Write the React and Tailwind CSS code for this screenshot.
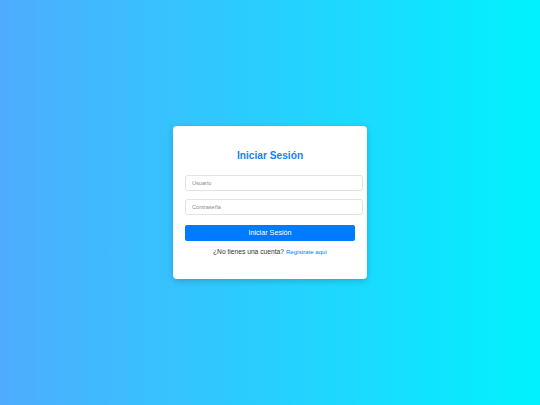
export default function App() {
  return (
    <div
      className="w-full h-[405px] flex items-center justify-center bg-[linear-gradient(to_right,#4facfe,#00f2fe)]"
      style={{ fontFamily: '"Liberation Sans", Arial, sans-serif' }}
    >
      <div className="w-[194px] h-[153px] bg-white rounded-[4px] shadow-[0_2px_6px_rgba(0,0,0,0.18)] pt-[12px] px-[12px] flex flex-col">
        <h2 className="mt-[8px] h-[20px] flex items-center justify-center text-[10.2px] font-bold text-[#1583f0] leading-none">
          Iniciar Sesión
        </h2>
        <input
          type="text"
          placeholder="Usuario"
          className="mt-[9px] w-[178px] h-[16px] shrink-0 border border-[#e2e2e2] rounded-[3px] px-[6px] text-[5.6px] outline-none placeholder:text-[#8a8a8a]"
        />
        <input
          type="password"
          placeholder="Contraseña"
          className="mt-[8px] w-[178px] h-[16px] shrink-0 border border-[#e2e2e2] rounded-[3px] px-[6px] text-[5.6px] outline-none placeholder:text-[#8a8a8a]"
        />
        <button className="mt-[10px] w-[170px] h-[16px] shrink-0 bg-[#007bff] rounded-[2px] text-white text-[7.2px] flex items-center justify-center leading-none">
          Iniciar Sesión
        </button>
        <p className="mt-[5px] h-[12px] flex items-center justify-center leading-none text-[6.7px] text-[#333]">
          ¿No tienes una cuenta?
          <a className="ml-[2px] text-[6px] text-[#007bff]">Regístrate aquí</a>
        </p>
      </div>
    </div>
  );
}
